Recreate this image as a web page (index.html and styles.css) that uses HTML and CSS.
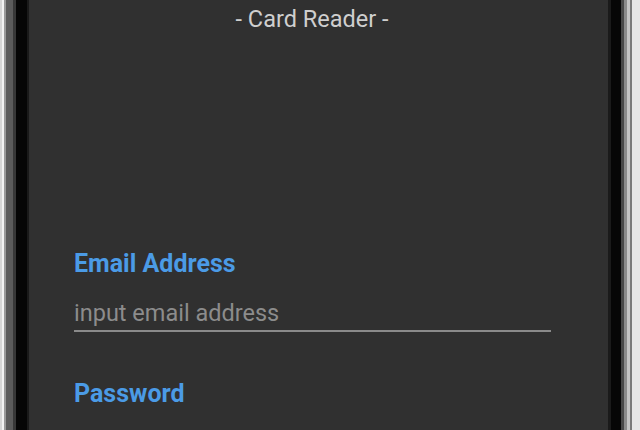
FILE: index.html
```html
<!DOCTYPE html>
<html lang="en">
<head>
<meta charset="utf-8">
<title>Card Reader</title>
<link rel="stylesheet" href="styles.css">
</head>
<body>
<div class="device">
  <main class="screen">
    <h1 class="title">- Card Reader -</h1>
    <form class="login">
      <label class="field-label" for="email">Email Address</label>
      <input class="field-input" id="email" type="email" placeholder="input email address">
      <label class="field-label password" for="password">Password</label>
    </form>
  </main>
</div>
</body>
</html>
```
FILE: styles.css
```css
html, body {
  margin: 0;
  padding: 0;
  height: 100%;
  overflow: hidden;
}

body {
  background: #ececec;
  font-family: Roboto, "Noto Sans", "Liberation Sans", sans-serif;
}

.device {
  height: 430px;
  width: 640px;
  display: flex;
  background: linear-gradient(to right,
    #d6d6d6 0, #d6d6d6 2px,
    #f2f2f2 2px, #f2f2f2 4px,
    #9a9a9a 4px, #9a9a9a 6px,
    #5c5c5c 6px, #5c5c5c 13px,
    #383838 13px, #383838 16px,
    #060606 16px, #060606 27px,
    #1a1a1a 27px, #1a1a1a 29px,
    #303030 29px, #303030 608px,
    #1a1a1a 608px, #1a1a1a 611px,
    #060606 611px, #060606 621px,
    #474747 621px, #474747 624px,
    #8a8a8a 624px, #8a8a8a 627px,
    #c4c4c4 627px, #c4c4c4 630px,
    #7a7a7a 630px, #7a7a7a 632px,
    #e6e6e6 632px, #e6e6e6 640px);
}

.screen {
  margin-left: 29px;
  width: 579px;
  height: 430px;
  background: #303030;
  display: flex;
  flex-direction: column;
}

.title {
  margin: 6px 0 0;
  font-size: 23.5px;
  line-height: 27px;
  font-weight: 400;
  color: #cfcfcf;
  text-align: center;
  padding-right: 13px;
}

.login {
  display: flex;
  flex-direction: column;
  align-items: flex-start;
  padding-left: 45px;
  margin-top: 216px;
}

.field-label {
  font-size: 25px;
  line-height: 29px;
  font-weight: 700;
  color: #4b9be6;
}

.field-input {
  margin-top: 21.5px;
  width: 477px;
  box-sizing: border-box;
  padding: 0 0 3px;
  border: 0;
  border-bottom: 2px solid #8a8a8a;
  background: transparent;
  font-family: inherit;
  font-size: 23.5px;
  line-height: 27px;
  color: #d0d0d0;
  outline: none;
}

.field-input::placeholder {
  color: #8c8c8c;
  opacity: 1;
}

.password {
  margin-top: 47px;
}
```
